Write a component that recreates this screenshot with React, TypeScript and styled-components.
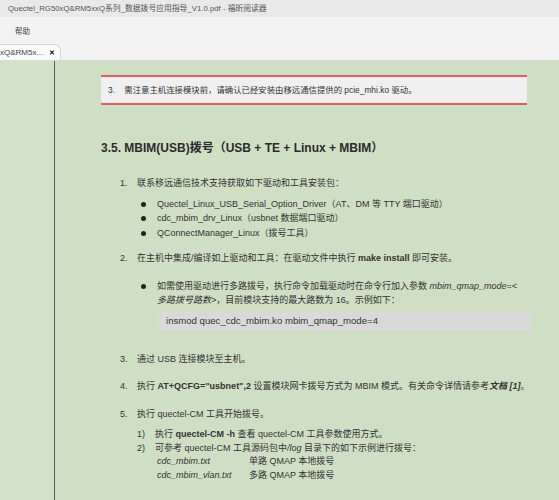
import styled, { createGlobalStyle } from "styled-components";

const GlobalStyle = createGlobalStyle`
    html, body {
        margin: 0;
        padding: 0;
        background: #cfdfc4;
    }
    body {
        font-family: "Liberation Sans", "Noto Sans CJK SC", sans-serif;
        color: #333;
    }
`;

const Window = styled.div`
    width: 559px;
    height: 500px;
    display: flex;
    flex-direction: column;
    overflow: hidden;
`;

const TitleBar = styled.div`
    height: 17px;
    line-height: 17px;
    padding-left: 8px;
    background: #e9e9e9;
    color: #555;
    font-size: 7.8px;
    white-space: nowrap;
`;

const MenuBar = styled.div`
    height: 26px;
    background: #f3f3f3;
    display: flex;
    align-items: center;
    padding: 0 0 0 15px;
    box-sizing: border-box;
    font-size: 7.5px;
    color: #444;
`;

const TabStrip = styled.div`
    height: 17px;
    background: #f3f3f3;
    display: flex;
    align-items: flex-end;
    border-bottom: 1px solid #d9ddd6;
`;

const Tab = styled.div`
    width: 61px;
    height: 16px;
    box-sizing: border-box;
    background: #fafafa;
    border: 1px solid #d6d6d6;
    border-left: none;
    border-bottom: none;
    border-top-right-radius: 7px;
    display: flex;
    align-items: center;
    justify-content: space-between;
    padding-right: 5px;
    font-size: 8px;
    color: #444;
    white-space: nowrap;
    overflow: hidden;
`;

const TabClose = styled.span`
    font-size: 7px;
    font-weight: bold;
    color: #111;
`;

const Workspace = styled.div`
    flex: 1;
    display: flex;
`;

const SidePane = styled.div`
    width: 54px;
    background: #d3e2c9;
    border-right: 1px solid #5c5c5c;
`;

const PageArea = styled.div`
    flex: 1;
    display: flex;
    flex-direction: column;
`;

const PageEdge = styled.div`
    height: 2px;
    width: 443px;
    margin-left: 37px;
    background: #d4d7d1;
`;

const Page = styled.div`
    padding: 12px 20px 0 46px;
    font-size: 9px;
    line-height: 14.5px;
`;

const Notice = styled.div`
    margin-right: 12px;
    border-top: 2px solid #d06666;
    border-bottom: 2px solid #d06666;
    box-shadow: inset 0 1px 0 #f6dede, inset 0 -1px 0 #f6dede;
    background: #f0f0f0;
    padding: 6px 7px;
    font-size: 8.4px;
    line-height: 14px;
    white-space: nowrap;
`;

const Heading = styled.h2`
    margin: 35px 0 20px;
    font-size: 12px;
    line-height: 16px;
    font-weight: bold;
    color: #2b2b2b;
`;

const Step = styled.div<{ $gap?: number }>`
    display: flex;
    margin-left: 19px;
    margin-bottom: ${(p) => p.$gap ?? 13}px;
`;

const Num = styled.span`
    width: 17px;
    flex-shrink: 0;
`;

const Body = styled.div`
    flex: 1;
    white-space: nowrap;
`;

const BulletList = styled.ul<{ $top?: number }>`
    list-style: none;
    margin: ${(p) => p.$top ?? 6}px 0 0;
    padding: 0 0 0 4px;
`;

const Bullet = styled.li`
    position: relative;
    padding-left: 16px;
    &::before {
        content: "";
        position: absolute;
        left: 0;
        top: 5px;
        width: 5px;
        height: 5px;
        border-radius: 50%;
        background: #222;
    }
`;

const Code = styled.div`
    margin: 3px 8px 0 22px;
    background: #d9d9d9;
    font-size: 9.6px;
    line-height: 20px;
    padding: 0 7px;
`;

const SubList = styled.div`
    margin-top: 7px;
    line-height: 13.5px;
`;

const SubItem = styled.div`
    display: flex;
`;

const SubNum = styled.span`
    width: 18px;
    flex-shrink: 0;
`;

const FileRow = styled.div`
    display: grid;
    grid-template-columns: 92px auto;
    padding-left: 20px;
`;

export default function App() {
    return (
        <>
            <GlobalStyle />
            <Window>
                <TitleBar>Quectel_RG50xQ&amp;RM5xxQ系列_数据拨号应用指导_V1.0.pdf - 福昕阅读器</TitleBar>
                <MenuBar>帮助</MenuBar>
                <TabStrip>
                    <Tab>
                        <span>xQ&amp;RM5x...</span>
                        <TabClose>✕</TabClose>
                    </Tab>
                </TabStrip>
                <Workspace>
                    <SidePane />
                    <PageArea>
                        <PageEdge />
                        <Page>
                            <Notice>3.&nbsp;&nbsp;&nbsp; 需注意主机连接模块前，请确认已经安装由移远通信提供的 pcie_mhi.ko 驱动。</Notice>
                            <Heading>3.5. MBIM(USB)拨号（USB + TE + Linux + MBIM）</Heading>

                            <Step $gap={11}>
                                <Num>1.</Num>
                                <Body>
                                    联系移远通信技术支持获取如下驱动和工具安装包：
                                    <BulletList>
                                        <Bullet>Quectel_Linux_USB_Serial_Option_Driver（AT、DM 等 TTY 端口驱动）</Bullet>
                                        <Bullet>cdc_mbim_drv_Linux（usbnet 数据端口驱动）</Bullet>
                                        <Bullet>QConnectManager_Linux（拨号工具）</Bullet>
                                    </BulletList>
                                </Body>
                            </Step>

                            <Step $gap={21}>
                                <Num>2.</Num>
                                <Body>
                                    在主机中集成/编译如上驱动和工具：在驱动文件中执行 <b>make install</b> 即可安装。
                                    <BulletList $top={13}>
                                        <Bullet>
                                            如需使用驱动进行多路拨号，执行命令加载驱动时在命令行加入参数 <i>mbim_qmap_mode=&lt;</i>
                                            <br />
                                            <i>多路拨号路数&gt;</i>，目前模块支持的最大路数为 16。示例如下：
                                        </Bullet>
                                    </BulletList>
                                    <Code>insmod quec_cdc_mbim.ko mbim_qmap_mode=4</Code>
                                </Body>
                            </Step>

                            <Step $gap={13}>
                                <Num>3.</Num>
                                <Body>通过 USB 连接模块至主机。</Body>
                            </Step>

                            <Step $gap={13}>
                                <Num>4.</Num>
                                <Body>
                                    执行 <b>AT+QCFG="usbnet",2</b> 设置模块网卡拨号方式为 MBIM 模式。有关命令详情请参考<b><i>文档 [1]</i></b>。
                                </Body>
                            </Step>

                            <Step>
                                <Num>5.</Num>
                                <Body>
                                    执行 quectel-CM 工具开始拨号。
                                    <SubList>
                                        <SubItem>
                                            <SubNum>1)</SubNum>
                                            <span>执行 <b>quectel-CM -h</b> 查看 quectel-CM 工具参数使用方式。</span>
                                        </SubItem>
                                        <SubItem>
                                            <SubNum>2)</SubNum>
                                            <span>可参考 quectel-CM 工具源码包中<i>/log</i> 目录下的如下示例进行拨号：</span>
                                        </SubItem>
                                        <FileRow>
                                            <i>cdc_mbim.txt</i>
                                            <span>单路 QMAP 本地拨号</span>
                                        </FileRow>
                                        <FileRow>
                                            <i>cdc_mbim_vlan.txt</i>
                                            <span>多路 QMAP 本地拨号</span>
                                        </FileRow>
                                    </SubList>
                                </Body>
                            </Step>
                        </Page>
                    </PageArea>
                </Workspace>
            </Window>
        </>
    );
}
